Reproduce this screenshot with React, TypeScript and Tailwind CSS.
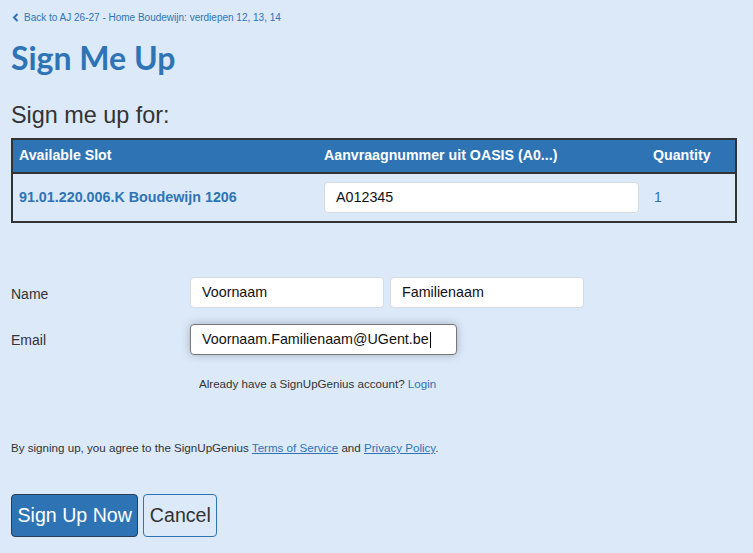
import React from "react";

const arial = { fontFamily: '"Liberation Sans", Arial, sans-serif' };

export default function App() {
  return (
    <div
      className="min-h-[553px] w-full bg-[#dbe9f9] pl-[11px] pr-[16px] text-[#333]"
      style={arial}
    >
      {/* back link */}
      <div className="flex items-center pt-[11px] h-[24px] text-[10px] text-[#2e74b5]">
        <svg width="8" height="9" viewBox="0 0 8 9" className="mr-[4px] ml-[1px]">
          <path d="M5.5 1 L2 4.5 L5.5 8" fill="none" stroke="#2e74b5" strokeWidth="2" />
        </svg>
        <span>Back to AJ 26-27 - Home Boudewijn: verdiepen 12, 13, 14</span>
      </div>

      <h1
        className="mt-[14px] text-[32px] leading-[40px] font-bold text-[#2e74b5]"
        style={{ fontFamily: 'Lato, "Open Sans", sans-serif' }}
      >
        Sign Me Up
      </h1>

      <h2 className="mt-[24px] text-[23.4px] leading-[26px] text-[#333]">Sign me up for:</h2>

      {/* slot table */}
      <div className="mt-[10px] w-[726px] border-2 border-[#333]">
        <div className="flex h-[34px] items-center bg-[#2e74b5] text-[14.2px] font-bold text-white border-b-2 border-[#333]">
          <div className="w-[311px] pl-[6px]">Available Slot</div>
          <div className="w-[329px]">Aanvraagnummer uit OASIS (A0...)</div>
          <div>Quantity</div>
        </div>
        <div className="flex h-[47px] items-center">
          <div className="w-[311px] pl-[6px] text-[14.3px] font-bold text-[#2e74b5]">
            91.01.220.006.K Boudewijn 1206
          </div>
          <div className="w-[329px]">
            <div className="flex h-[31px] w-[315px] items-center rounded-[4px] border border-[#d4dbe3] bg-white pl-[11px] text-[14.3px] text-[#111]">
              A012345
            </div>
          </div>
          <div className="pl-[1px] text-[14px] text-[#2e74b5]">1</div>
        </div>
      </div>

      {/* contact fields */}
      <div className="mt-[54px] flex items-center">
        <div className="w-[179px] pt-[3px] text-[14px] text-[#333]">Name</div>
        <div className="flex h-[31px] w-[194px] items-center rounded-[4px] border border-[#d4dbe3] bg-white pl-[11px] text-[14.3px] text-[#111]">
          Voornaam
        </div>
        <div className="ml-[6px] flex h-[31px] w-[194px] items-center rounded-[4px] border border-[#d4dbe3] bg-white pl-[11px] text-[14.3px] text-[#111]">
          Familienaam
        </div>
      </div>

      <div className="mt-[16px] flex items-center">
        <div className="w-[179px] pt-[2px] text-[14px] text-[#333]">Email</div>
        <div className="flex h-[31px] w-[267px] items-center rounded-[4px] border border-[#777] bg-white pl-[11px] text-[14.3px] text-[#111] shadow-[0_0_8px_rgba(0,0,0,0.25)]">
          Voornaam.Familienaam@UGent.be
          <span className="ml-[1px] inline-block h-[16px] w-[1px] bg-black" />
        </div>
      </div>

      <div className="mt-[20px] pl-[188px] text-[11.6px] text-[#333]">
        Already have a SignUpGenius account? <span className="text-[#2e74b5]">Login</span>
      </div>

      <div className="mt-[47px] text-[11.6px] text-[#333]">
        By signing up, you agree to the SignUpGenius{" "}
        <span className="text-[#2e74b5] underline">Terms of Service</span> and{" "}
        <span className="text-[#2e74b5] underline">Privacy Policy</span>.
      </div>

      <div className="mt-[37px] flex items-start gap-[5px]">
        <button
          className="h-[43px] rounded-[4px] border border-[#2a3f57] bg-[#2e74b5] px-[5.5px] text-[19.6px] text-white"
          style={arial}
        >
          Sign Up Now
        </button>
        <button
          className="h-[43px] rounded-[4px] border border-[#2e74b5] bg-transparent px-[5.5px] text-[19.6px] text-[#333]"
          style={arial}
        >
          Cancel
        </button>
      </div>
    </div>
  );
}
